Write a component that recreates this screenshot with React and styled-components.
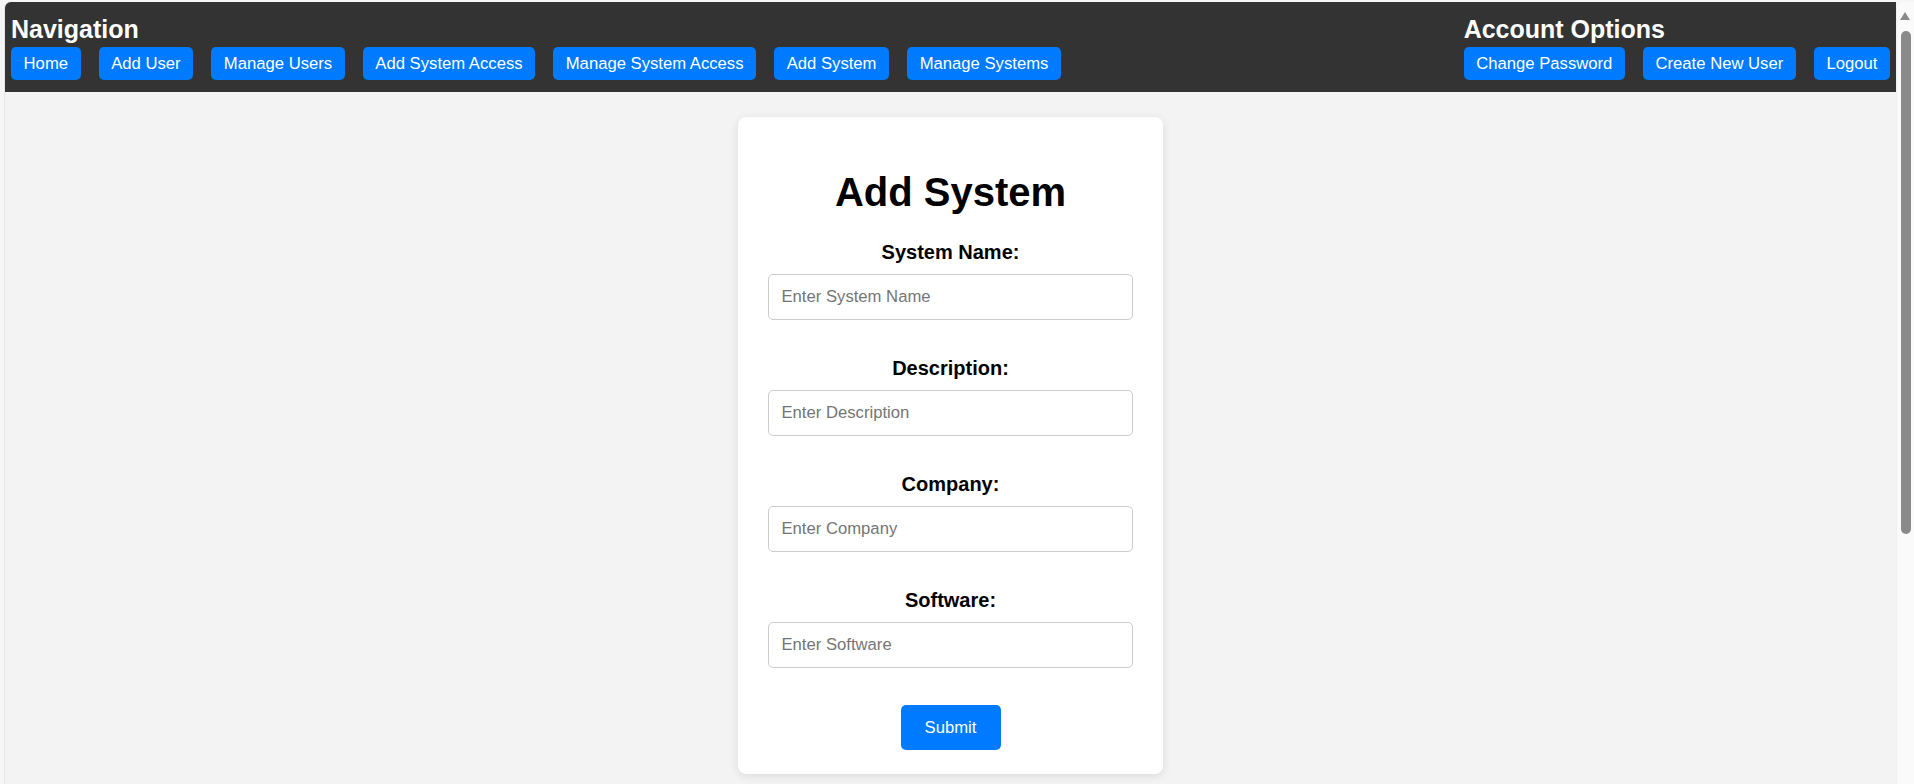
import React from "react";
import styled, { createGlobalStyle } from "styled-components";

const GlobalStyle = createGlobalStyle`
  html, body {
    margin: 0;
    padding: 0;
    background: #f6f6f6;
    font-family: "Liberation Sans", Arial, sans-serif;
  }
  html {
    scrollbar-width: none;
  }
  html::-webkit-scrollbar {
    display: none;
  }
`;

const Page = styled.div`
  margin: 2px 18px 0 5px;
  border-top-left-radius: 6px;
  overflow: hidden;
  background: #f3f3f3;
  box-shadow: -1px 0 0 #e6e6e6;
`;

const Header = styled.header`
  display: flex;
  justify-content: space-between;
  align-items: flex-start;
  background: #333333;
  padding: 13px 6px 12px;
`;

const NavGroup = styled.nav`
  display: flex;
  flex-direction: column;
  gap: 3px;
`;

const GroupTitle = styled.h2`
  margin: 0;
  color: #ffffff;
  font-size: 25px;
  font-weight: 700;
  line-height: 29px;
`;

const ButtonRow = styled.div`
  display: flex;
  gap: 18px;
`;

const NavButton = styled.button`
  height: 33px;
  padding: 0 12.6px;
  border: none;
  border-radius: 5px;
  background: #007bff;
  color: #ffffff;
  font-family: "Liberation Sans", Arial, sans-serif;
  font-size: 16.67px;
  line-height: 33px;
  white-space: nowrap;
  cursor: pointer;
`;

const Main = styled.main`
  min-height: 1053px;
  padding-top: 25px;
  display: flex;
  justify-content: center;
  align-items: flex-start;
  box-sizing: border-box;
`;

const Card = styled.form`
  width: 425px;
  box-sizing: border-box;
  padding: 25px 30px 24px;
  background: #ffffff;
  border-radius: 8px;
  box-shadow: 0 2px 10px rgba(0, 0, 0, 0.1);
  display: flex;
  flex-direction: column;
  align-items: stretch;
`;

const Title = styled.h1`
  margin: 27px 0 26px;
  text-align: center;
  font-size: 40px;
  line-height: 46px;
  font-weight: 700;
  color: #000000;
`;

const Field = styled.div`
  display: flex;
  flex-direction: column;
  gap: 10px;
  margin-bottom: 37px;
`;

const Label = styled.label`
  text-align: center;
  font-size: 20px;
  line-height: 23px;
  font-weight: 700;
  color: #000000;
`;

const Input = styled.input`
  box-sizing: border-box;
  width: 100%;
  height: 46px;
  padding: 0 12.5px;
  border: 1px solid #cccccc;
  border-radius: 5px;
  background: #ffffff;
  font-family: "Liberation Sans", Arial, sans-serif;
  font-size: 16.67px;
  color: #000000;
  outline: none;
  &::placeholder {
    color: #757575;
  }
`;

const SubmitButton = styled.button`
  align-self: center;
  width: 100px;
  height: 45px;
  border: none;
  border-radius: 5px;
  background: #007bff;
  color: #ffffff;
  font-family: "Liberation Sans", Arial, sans-serif;
  font-size: 16.67px;
  cursor: pointer;
`;

/* Window scrollbar drawn over the right edge of the viewport */
const ScrollTrack = styled.div`
  position: fixed;
  top: 2px;
  right: 0;
  bottom: 0;
  width: 17px;
  background: #fafafa;
  border-top-left-radius: 6px;
  box-shadow: -1px 0 0 #f0f0f0;
`;

const ScrollArrow = styled.div`
  position: absolute;
  top: 10px;
  left: 3px;
  width: 0;
  height: 0;
  border-left: 5.5px solid transparent;
  border-right: 5.5px solid transparent;
  border-bottom: 8px solid #8a8a8a;
`;

const ScrollThumb = styled.div`
  position: absolute;
  top: 29px;
  left: 4px;
  width: 10px;
  height: 503px;
  border-radius: 5px;
  background: #8a8a8a;
`;

const navItems = [
  "Home",
  "Add User",
  "Manage Users",
  "Add System Access",
  "Manage System Access",
  "Add System",
  "Manage Systems",
];

const accountItems = ["Change Password", "Create New User", "Logout"];

const fields = [
  { id: "systemName", label: "System Name:", placeholder: "Enter System Name" },
  { id: "description", label: "Description:", placeholder: "Enter Description" },
  { id: "company", label: "Company:", placeholder: "Enter Company" },
  { id: "software", label: "Software:", placeholder: "Enter Software" },
];

export default function App() {
  return (
    <>
      <GlobalStyle />
      <Page>
        <Header>
          <NavGroup>
            <GroupTitle>Navigation</GroupTitle>
            <ButtonRow>
              {navItems.map((item) => (
                <NavButton key={item} type="button">
                  {item}
                </NavButton>
              ))}
            </ButtonRow>
          </NavGroup>
          <NavGroup>
            <GroupTitle>Account Options</GroupTitle>
            <ButtonRow>
              {accountItems.map((item) => (
                <NavButton key={item} type="button">
                  {item}
                </NavButton>
              ))}
            </ButtonRow>
          </NavGroup>
        </Header>
        <Main>
          <Card onSubmit={(e) => e.preventDefault()}>
            <Title>Add System</Title>
            {fields.map((f) => (
              <Field key={f.id}>
                <Label htmlFor={f.id}>{f.label}</Label>
                <Input id={f.id} type="text" placeholder={f.placeholder} />
              </Field>
            ))}
            <SubmitButton type="submit">Submit</SubmitButton>
          </Card>
        </Main>
      </Page>
      <ScrollTrack aria-hidden="true">
        <ScrollArrow />
        <ScrollThumb />
      </ScrollTrack>
    </>
  );
}
